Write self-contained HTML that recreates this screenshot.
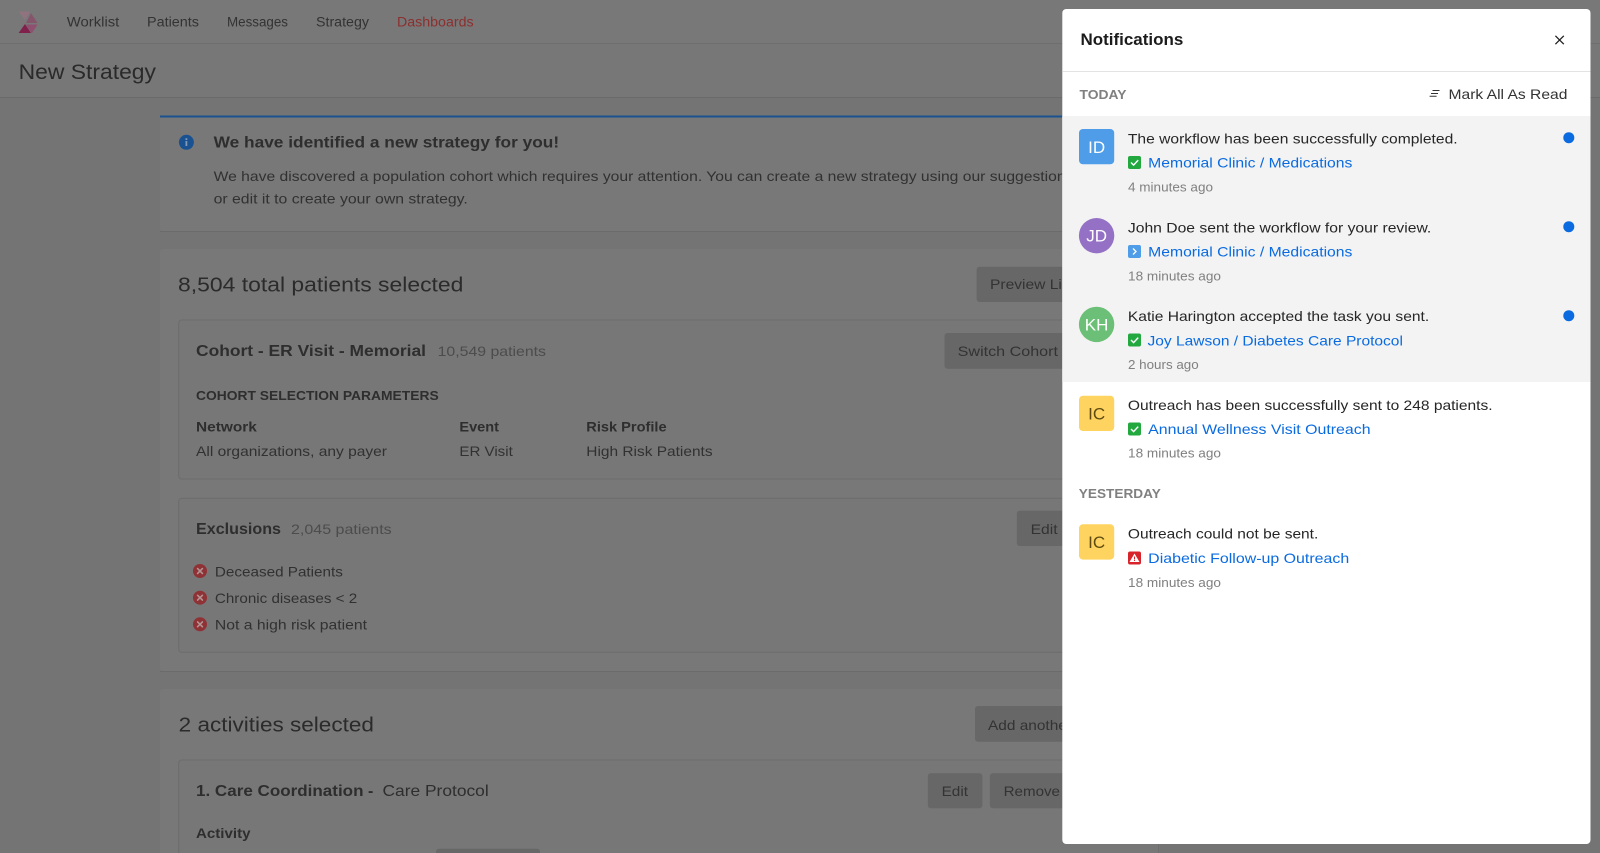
<!DOCTYPE html>
<html lang="en">
<head>
<meta charset="utf-8">
<title>New Strategy - Notifications</title>
<style>
html,body{margin:0;padding:0;width:1600px;height:853px;overflow:hidden;background:#747474}
svg{display:block}
text{font-family:"Liberation Sans",sans-serif;white-space:pre}
.nav{font-size:13.5px;fill:#333}
.b{font-size:14px;fill:#313131}
.m{font-weight:bold;font-size:14px;fill:#2e2e2e}
.g{font-size:14px;fill:#4c4c4c}
.h{font-size:20.5px;fill:#2b2b2b}
.btn{font-size:14px;fill:#333}
.p{font-size:14px;fill:#262626}
.l{font-size:14px;fill:#0a6be0}
.t{font-size:12.5px;fill:#808080}
.s{font-size:12.5px;font-weight:bold;fill:#808080}
.a{font-size:17px;text-anchor:middle}
</style>
</head>
<body>
<svg width="1600" height="853" viewBox="0 0 1600 853" xmlns="http://www.w3.org/2000/svg">
<rect width="1600" height="853" fill="#747474"/>
<!-- top nav -->
<rect width="1600" height="43" fill="#787878"/>
<rect y="43" width="1600" height="1" fill="#6e6e6e"/>
<polygon points="18.6,11.5 30,11.5 25,20" fill="#917380"/>
<polygon points="31,13 37.5,23 26,23" fill="#85566b"/>
<polygon points="37.5,24.5 32,33 31.5,33 26,24.5" fill="#8f4f6f"/>
<polygon points="25,24 31,33 18.6,33" fill="#80214c"/>
<text class="nav" x="66.8" y="26.7" textLength="52.5" lengthAdjust="spacingAndGlyphs">Worklist</text>
<text class="nav" x="147" y="26.7" textLength="52" lengthAdjust="spacingAndGlyphs">Patients</text>
<text class="nav" x="227" y="26.7" textLength="61" lengthAdjust="spacingAndGlyphs">Messages</text>
<text class="nav" x="316" y="26.7" textLength="53" lengthAdjust="spacingAndGlyphs">Strategy</text>
<text class="nav" x="397" y="26.7" textLength="76.6" lengthAdjust="spacingAndGlyphs" style="fill:#8c2f2f">Dashboards</text>
<!-- sub header -->
<rect y="44" width="1600" height="53" fill="#777777"/>
<rect y="97" width="1600" height="1" fill="#6a6a6a"/>
<text x="18.6" y="79" font-size="21" fill="#2a2a2a" textLength="137.4" lengthAdjust="spacingAndGlyphs">New Strategy</text>
<!-- alert card -->
<rect x="160" y="115.5" width="1000" height="116" rx="3" fill="#787878"/>
<rect x="160" y="231" width="1000" height="1" fill="#6b6b6b"/>
<rect x="160" y="115.5" width="1000" height="2" fill="#1a5291"/>
<circle cx="186.4" cy="142.3" r="7.5" fill="#1a5291"/>
<rect x="185.5" y="141" width="1.8" height="5" fill="#8099b6"/>
<rect x="185.5" y="138.2" width="1.8" height="1.8" fill="#8099b6"/>
<text x="213.6" y="147.7" font-size="15.5" font-weight="bold" fill="#2e2e2e" textLength="345.5" lengthAdjust="spacingAndGlyphs">We have identified a new strategy for you!</text>
<text class="b" x="213.6" y="181" textLength="852" lengthAdjust="spacingAndGlyphs">We have discovered a population cohort which requires your attention. You can create a new strategy using our suggestion</text>
<text class="b" x="213.6" y="203.3" textLength="254.2" lengthAdjust="spacingAndGlyphs">or edit it to create your own strategy.</text>
<!-- cohort card -->
<rect x="160" y="249" width="1000" height="422" rx="3" fill="#787878"/>
<rect x="160" y="671" width="1000" height="1" fill="#6b6b6b"/>
<text class="h" x="178" y="291.7" textLength="285.4" lengthAdjust="spacingAndGlyphs">8,504 total patients selected</text>
<rect x="976.6" y="266.7" width="120" height="35.3" rx="3" fill="#676767"/>
<text class="btn" x="990" y="289" textLength="84" lengthAdjust="spacingAndGlyphs">Preview List</text>
<rect x="178.7" y="320" width="980" height="159" rx="3" fill="#777777" stroke="#6c6c6c"/>
<text x="196" y="356" font-size="16" font-weight="bold" fill="#2e2e2e" textLength="230" lengthAdjust="spacingAndGlyphs">Cohort - ER Visit - Memorial</text>
<text class="g" x="437.6" y="356" textLength="108.4" lengthAdjust="spacingAndGlyphs">10,549 patients</text>
<rect x="944.5" y="333" width="130" height="35.7" rx="3" fill="#676767"/>
<text class="btn" x="957.7" y="356" textLength="100.3" lengthAdjust="spacingAndGlyphs">Switch Cohort</text>
<text x="196" y="400" font-size="12.5" font-weight="bold" fill="#2e2e2e" textLength="242.7" lengthAdjust="spacingAndGlyphs">COHORT SELECTION PARAMETERS</text>
<text class="m" x="196" y="431.7" textLength="60.8" lengthAdjust="spacingAndGlyphs">Network</text>
<text class="m" x="459.4" y="431.7" textLength="39.6" lengthAdjust="spacingAndGlyphs">Event</text>
<text class="m" x="586.3" y="431.7" textLength="80.3" lengthAdjust="spacingAndGlyphs">Risk Profile</text>
<text class="b" x="196" y="456" textLength="191" lengthAdjust="spacingAndGlyphs">All organizations, any payer</text>
<text class="b" x="459.4" y="456" textLength="53.4" lengthAdjust="spacingAndGlyphs">ER Visit</text>
<text class="b" x="586.3" y="456" textLength="126.3" lengthAdjust="spacingAndGlyphs">High Risk Patients</text>
<!-- exclusions -->
<rect x="178.7" y="498.3" width="980" height="154" rx="3" fill="#777777" stroke="#6c6c6c"/>
<text x="196" y="534" font-size="16" font-weight="bold" fill="#2e2e2e" textLength="85" lengthAdjust="spacingAndGlyphs">Exclusions</text>
<text class="g" x="291" y="534" textLength="100.7" lengthAdjust="spacingAndGlyphs">2,045 patients</text>
<rect x="1016.8" y="510.7" width="60" height="35.3" rx="3" fill="#676767"/>
<text class="btn" x="1030.6" y="534" textLength="27" lengthAdjust="spacingAndGlyphs">Edit</text>
<circle cx="200" cy="571" r="7" fill="#8f3236"/>
<circle cx="200" cy="597.7" r="7" fill="#8f3236"/>
<circle cx="200" cy="624.3" r="7" fill="#8f3236"/>
<g stroke="#b29494" stroke-width="1.6" stroke-linecap="round" fill="none">
<path d="M197.6 568.6l4.8 4.8M202.4 568.6l-4.8 4.8"/>
<path d="M197.6 595.3l4.8 4.8M202.4 595.3l-4.8 4.8"/>
<path d="M197.6 621.9l4.8 4.8M202.4 621.9l-4.8 4.8"/>
</g>
<text class="b" x="214.9" y="576.3" textLength="128" lengthAdjust="spacingAndGlyphs">Deceased Patients</text>
<text class="b" x="214.9" y="603" textLength="142.3" lengthAdjust="spacingAndGlyphs">Chronic diseases &lt; 2</text>
<text class="b" x="214.9" y="629.6" textLength="152.1" lengthAdjust="spacingAndGlyphs">Not a high risk patient</text>
<!-- activities card -->
<rect x="160" y="689" width="1000" height="180" rx="3" fill="#787878"/>
<text class="h" x="178.7" y="731.7" textLength="195.2" lengthAdjust="spacingAndGlyphs">2 activities selected</text>
<rect x="975" y="706" width="120" height="35.7" rx="3" fill="#676767"/>
<text class="btn" x="988" y="730" textLength="84" lengthAdjust="spacingAndGlyphs">Add another</text>
<rect x="178.7" y="760" width="980" height="110" rx="3" fill="#777777" stroke="#6c6c6c"/>
<text x="196" y="796" font-size="16" font-weight="bold" fill="#2e2e2e" textLength="167.5" lengthAdjust="spacingAndGlyphs">1. Care Coordination</text>
<text x="368" y="796" font-size="16" font-weight="bold" fill="#2e2e2e">-</text>
<text x="382.5" y="796" font-size="16" fill="#2e2e2e" textLength="106.2" lengthAdjust="spacingAndGlyphs">Care Protocol</text>
<rect x="927.8" y="773.3" width="54.6" height="35" rx="3" fill="#676767"/>
<text class="btn" x="941.6" y="796" textLength="26.4" lengthAdjust="spacingAndGlyphs">Edit</text>
<rect x="989.8" y="773.3" width="90" height="35" rx="3" fill="#676767"/>
<text class="btn" x="1003.6" y="796" textLength="56.4" lengthAdjust="spacingAndGlyphs">Remove</text>
<text class="m" x="196" y="838" textLength="54.5" lengthAdjust="spacingAndGlyphs">Activity</text>
<rect x="436" y="848.7" width="104" height="20" rx="3" fill="#676767"/>

<!-- notifications panel -->
<rect x="1062.3" y="9" width="528.2" height="835" rx="4" fill="#ffffff"/>
<text x="1080.5" y="45" font-size="16.5" font-weight="bold" fill="#1c1c1c" textLength="102.8" lengthAdjust="spacingAndGlyphs">Notifications</text>
<path d="M1555.4 35.8l8.4 8.4M1563.8 35.8l-8.4 8.4" stroke="#222" stroke-width="1.3" fill="none"/>
<rect x="1062.3" y="71" width="528.2" height="1" fill="#e3e3e3"/>
<text class="s" x="1079.5" y="99" textLength="47" lengthAdjust="spacingAndGlyphs">TODAY</text>
<path d="M1432.5 90.5h7M1431 93.5h7M1429.6 96.3h7" stroke="#333" stroke-width="1" fill="none"/>
<text x="1448.5" y="99" font-size="14" fill="#333" textLength="118.9" lengthAdjust="spacingAndGlyphs">Mark All As Read</text>
<rect x="1062.3" y="116" width="528.2" height="266" fill="#f3f3f3"/>

<!-- row 1 -->
<rect x="1079" y="129" width="35.2" height="35.3" rx="4" fill="#4f9ce8"/>
<text class="a" x="1096.6" y="153" fill="#fff">ID</text>
<text class="p" x="1127.9" y="143.3" textLength="329.7" lengthAdjust="spacingAndGlyphs">The workflow has been successfully completed.</text>
<rect x="1128" y="156" width="13" height="13" rx="2" fill="#22a83f"/>
<path d="M1131 162.5l2.600 2.600 4.600-5" stroke="#fff" stroke-width="1.4" fill="none"/>
<text class="l" x="1148.2" y="167.7" textLength="204.2" lengthAdjust="spacingAndGlyphs">Memorial Clinic / Medications</text>
<text class="t" x="1128" y="191.3" textLength="85" lengthAdjust="spacingAndGlyphs">4 minutes ago</text>
<circle cx="1568.8" cy="137.7" r="5.5" fill="#0a6be0"/>

<!-- row 2 -->
<circle cx="1096.6" cy="235.7" r="17.7" fill="#9471c4"/>
<text class="a" x="1096.6" y="241.7" fill="#fff">JD</text>
<text class="p" x="1127.9" y="232.3" textLength="303.4" lengthAdjust="spacingAndGlyphs">John Doe sent the workflow for your review.</text>
<rect x="1128" y="245" width="13" height="13" rx="2" fill="#4f9ce8"/>
<path d="M1133 248.500l3 3-3 3" stroke="#fff" stroke-width="1.3" fill="none"/>
<text class="l" x="1148.2" y="256.7" textLength="204.2" lengthAdjust="spacingAndGlyphs">Memorial Clinic / Medications</text>
<text class="t" x="1128" y="280.3" textLength="93" lengthAdjust="spacingAndGlyphs">18 minutes ago</text>
<circle cx="1568.8" cy="226.7" r="5.5" fill="#0a6be0"/>

<!-- row 3 -->
<circle cx="1096.6" cy="324.4" r="17.7" fill="#6cbf76"/>
<text class="a" x="1096.6" y="330.4" fill="#fff">KH</text>
<text class="p" x="1127.9" y="321" textLength="301.3" lengthAdjust="spacingAndGlyphs">Katie Harington accepted the task you sent.</text>
<rect x="1128" y="333.5" width="13" height="13" rx="2" fill="#22a83f"/>
<path d="M1131 340l2.600 2.600 4.600-5" stroke="#fff" stroke-width="1.4" fill="none"/>
<text class="l" x="1147.5" y="345.3" textLength="255.4" lengthAdjust="spacingAndGlyphs">Joy Lawson / Diabetes Care Protocol</text>
<text class="t" x="1128" y="369" textLength="70.7" lengthAdjust="spacingAndGlyphs">2 hours ago</text>
<circle cx="1568.8" cy="315.7" r="5.5" fill="#0a6be0"/>

<!-- row 4 -->
<rect x="1079" y="395.7" width="35.2" height="35.3" rx="4" fill="#ffd35f"/>
<text class="a" x="1096.6" y="419.4" fill="#5f4b12">IC</text>
<text class="p" x="1127.9" y="410" textLength="364.7" lengthAdjust="spacingAndGlyphs">Outreach has been successfully sent to 248 patients.</text>
<rect x="1128" y="422.500" width="13" height="13" rx="2" fill="#22a83f"/>
<path d="M1131 429l2.600 2.600 4.600-5" stroke="#fff" stroke-width="1.4" fill="none"/>
<text class="l" x="1148.2" y="434" textLength="222.4" lengthAdjust="spacingAndGlyphs">Annual Wellness Visit Outreach</text>
<text class="t" x="1128" y="457.7" textLength="93" lengthAdjust="spacingAndGlyphs">18 minutes ago</text>

<text class="s" x="1078.8" y="498" textLength="82" lengthAdjust="spacingAndGlyphs">YESTERDAY</text>

<!-- row 5 -->
<rect x="1079" y="524.3" width="35.2" height="35.3" rx="4" fill="#ffd35f"/>
<text class="a" x="1096.6" y="548" fill="#5f4b12">IC</text>
<text class="p" x="1127.9" y="538.7" textLength="190.4" lengthAdjust="spacingAndGlyphs">Outreach could not be sent.</text>
<rect x="1128" y="551.5" width="13" height="13" rx="2" fill="#d9232b"/>
<polygon points="1134.5,553.5 1139.5,562 1129.5,562" fill="#fff"/>
<rect x="1134" y="556.5" width="1" height="3" fill="#d9232b"/>
<rect x="1134" y="560" width="1" height="1" fill="#d9232b"/>
<text class="l" x="1148.2" y="563" textLength="201" lengthAdjust="spacingAndGlyphs">Diabetic Follow-up Outreach</text>
<text class="t" x="1128" y="587" textLength="93" lengthAdjust="spacingAndGlyphs">18 minutes ago</text>
</svg>
</body>
</html>
